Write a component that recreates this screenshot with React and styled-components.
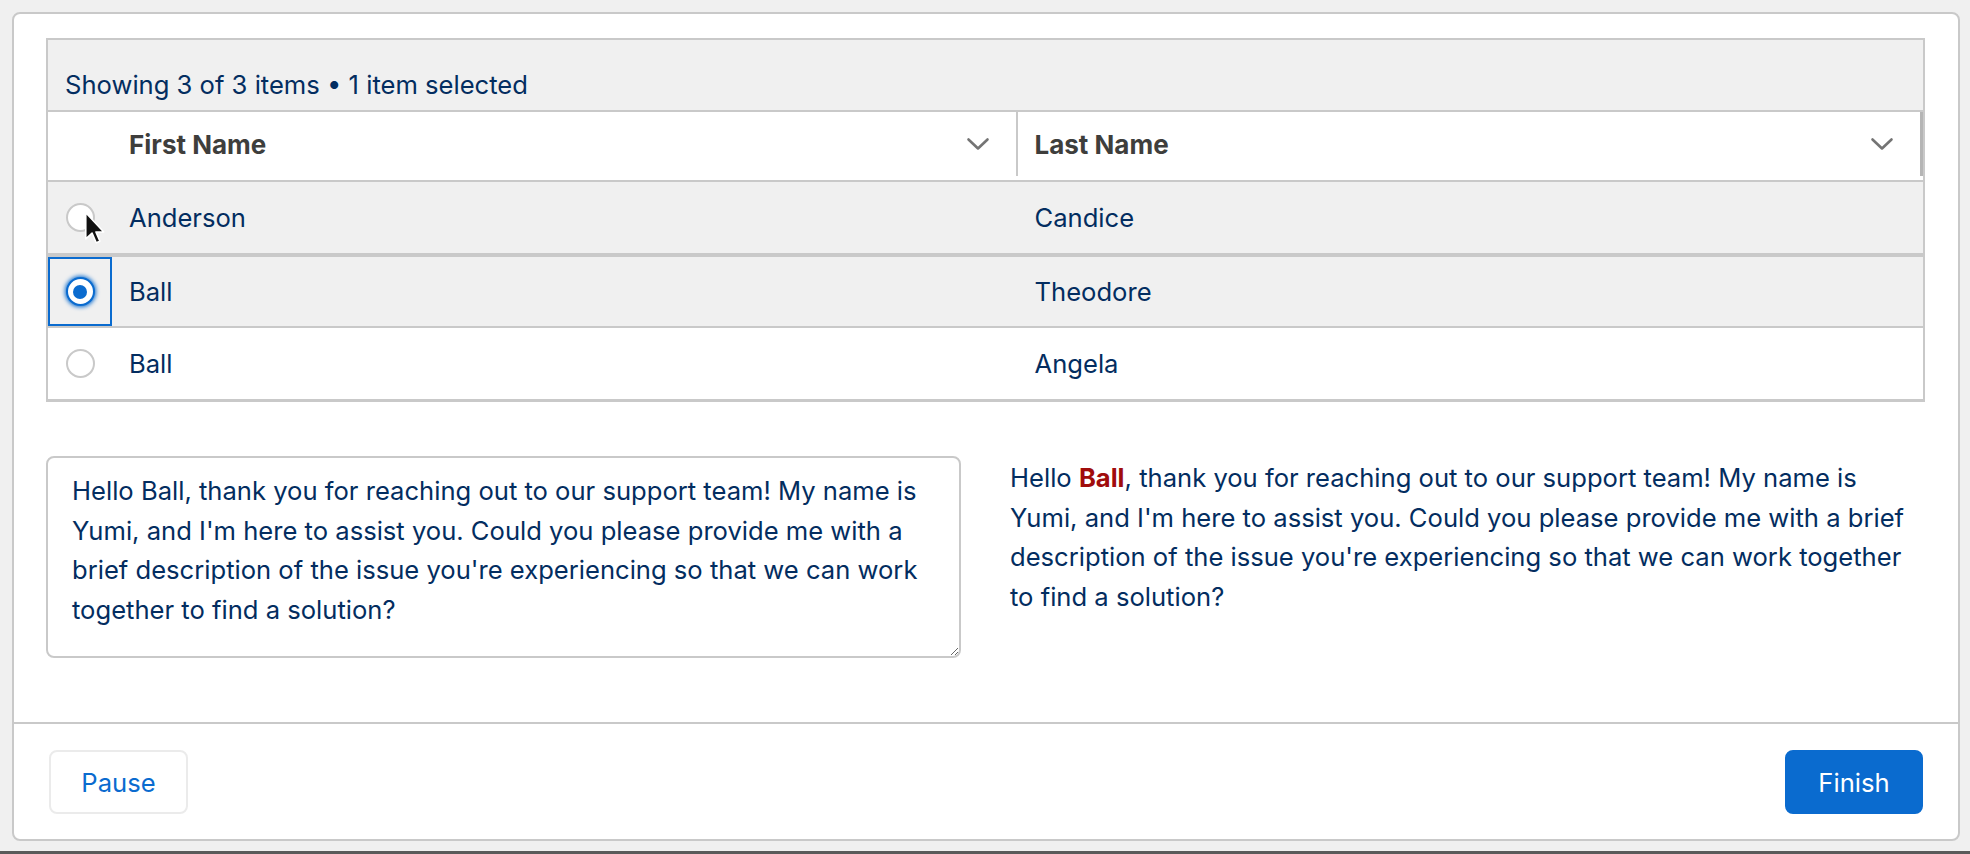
import React from 'react'
import styled, { createGlobalStyle } from 'styled-components'

const GlobalStyle = createGlobalStyle`
  html, body {
    margin: 0;
    padding: 0;
    background: #f0f0f0;
  }
  body {
    font-family: Inter, "Noto Sans", sans-serif;
    color: #032d60;
  }
  * { box-sizing: border-box; }
`

const BLUE = '#0a6bcf'
const LINE = '#c9c9c9'

const rows = [
  { first: 'Anderson', last: 'Candice', hover: true },
  { first: 'Ball', last: 'Theodore', selected: true },
  { first: 'Ball', last: 'Angela' },
]

const Chevron = () => (
  <svg width="24" height="14" viewBox="0 0 24 14">
    <path d="M2.5 2.5 L12 11.5 L21.5 2.5" fill="none" stroke="#747474" strokeWidth="2.6" strokeLinecap="round" strokeLinejoin="round" />
  </svg>
)

const Pointer = () => (
  <PointerSvg width="21" height="34" viewBox="0 0 12 19.5">
    <path d="M1 1 L1 16 L4.6 12.7 L7 18.2 L9.1 17.3 L6.8 12 L11.3 12 Z" fill="#111" stroke="#fff" strokeWidth="0.9" strokeLinejoin="round" />
  </PointerSvg>
)

const App = () => {
  return (
    <>
      <GlobalStyle />
      <Page>
        <Card>
          <Body>
            <Table>
              <Toolbar>Showing 3 of 3 items • 1 item selected</Toolbar>
              <HeaderRow>
                <HeadCell />
                <HeadCell $label>
                  First Name
                  <Chevron />
                </HeadCell>
                <HeadCell $label $last>
                  Last Name
                  <Chevron />
                </HeadCell>
              </HeaderRow>
              {rows.map((r, i) => (
                <Row key={i} $shaded={r.hover || r.selected} $selected={r.selected}>
                  <RadioCell $focused={r.selected}>
                    <Radio $checked={r.selected} />
                    {r.hover && <Pointer />}
                  </RadioCell>
                  <Cell>{r.first}</Cell>
                  <Cell>{r.last}</Cell>
                </Row>
              ))}
            </Table>
            <Fields>
              <TextArea
                defaultValue="Hello Ball, thank you for reaching out to our support team! My name is Yumi, and I'm here to assist you. Could you please provide me with a brief description of the issue you're experiencing so that we can work together to find a solution?"
              />
              <Preview>
                Hello <Name>Ball</Name>, thank you for reaching out to our support team! My name is Yumi, and I'm here to assist you. Could you please provide me with a brief description of the issue you're experiencing so that we can work together to find a solution?
              </Preview>
            </Fields>
          </Body>
          <Footer>
            <Button>Pause</Button>
            <Button $primary>Finish</Button>
          </Footer>
        </Card>
        <BottomEdge />
      </Page>
    </>
  )
}

export default App

const Page = styled.div`
  height: 854px;
  display: flex;
  flex-direction: column;
`

const Card = styled.div`
  margin: 12px 10px 0 12px;
  height: 829px;
  background: #fff;
  border: 2px solid ${LINE};
  border-radius: 8px;
  display: flex;
  flex-direction: column;
`

const Body = styled.div`
  flex: 1;
  padding: 24px 33px 0 32px;
`

const Table = styled.div`
  border: 2px solid ${LINE};
  border-bottom-width: 3px;
`

const Toolbar = styled.div`
  height: 72px;
  background: #f0f0f0;
  border-bottom: 2px solid ${LINE};
  display: flex;
  align-items: flex-end;
  padding: 0 17px 6px;
  font-size: 25.6px;
  line-height: 39px;
  color: #032d60;
`

const HeaderRow = styled.div`
  display: grid;
  grid-template-columns: 64px 1fr 1fr;
  height: 68px;
  background: #fff;
`

const HeadCell = styled.div`
  display: flex;
  align-items: center;
  justify-content: space-between;
  padding: 0 26px 0 17px;
  font-size: 26px;
  font-weight: 700;
  color: #3e3e3c;
  border-right: ${p => (p.$label ? (p.$last ? '3px solid #b5b5b5' : `2px solid ${LINE}`) : 'none')};
  margin-bottom: ${p => (p.$label ? '4px' : '0')};
`

const Row = styled.div`
  display: grid;
  grid-template-columns: 64px 1fr 1fr;
  height: 73px;
  border-top: ${p => (p.$selected ? '4px' : '2px')} solid ${LINE};
  background: ${p => (p.$shaded ? '#f0f0f0' : '#fff')};
`

const Cell = styled.div`
  display: flex;
  align-items: center;
  padding: 0 17px;
  font-size: 25.6px;
  color: #032d60;
`

const RadioCell = styled.div`
  position: relative;
  display: flex;
  align-items: center;
  justify-content: center;
  box-shadow: ${p => (p.$focused ? `inset 0 0 0 2px ${BLUE}` : 'none')};
`

const Radio = styled.span`
  width: 29px;
  height: 29px;
  border-radius: 50%;
  background: #fff;
  border: 2px solid ${p => (p.$checked ? BLUE : LINE)};
  box-shadow: ${p => (p.$checked ? `0 0 4px 1px ${BLUE}` : 'none')};
  display: flex;
  align-items: center;
  justify-content: center;

  &::after {
    content: '';
    display: ${p => (p.$checked ? 'block' : 'none')};
    width: 14px;
    height: 14px;
    border-radius: 50%;
    background: ${BLUE};
  }
`

const PointerSvg = styled.svg`
  position: absolute;
  left: 36px;
  top: 29px;
`

const Fields = styled.div`
  display: grid;
  grid-template-columns: 1fr 1fr;
  column-gap: 49px;
  margin-top: 54px;
`

const TextArea = styled.textarea`
  width: 100%;
  height: 202px;
  border: 2px solid ${LINE};
  border-radius: 8px;
  padding: 13px 24px 0 24px;
  font-family: Inter, "Noto Sans", sans-serif;
  font-size: 25.6px;
  line-height: 39.7px;
  color: #032d60;
  background: #fff;
  outline: none;
  resize: both;
`

const Preview = styled.p`
  margin: 0;
  padding-top: 2px;
  font-size: 25.6px;
  line-height: 39.7px;
  color: #032d60;
`

const Name = styled.span`
  color: #a00c0c;
  font-weight: 700;
`

const Footer = styled.div`
  height: 117px;
  border-top: 2px solid ${LINE};
  padding: 26px 35px 0 35px;
  display: flex;
  justify-content: space-between;
  align-items: flex-start;
`

const Button = styled.button`
  height: 64px;
  width: ${p => (p.$primary ? '138px' : '139px')};
  border-radius: 8px;
  border: 2px solid ${p => (p.$primary ? BLUE : '#ebebeb')};
  background: ${p => (p.$primary ? BLUE : '#fff')};
  color: ${p => (p.$primary ? '#fff' : BLUE)};
  font-family: Inter, "Noto Sans", sans-serif;
  font-size: 25.6px;
  cursor: pointer;
`

const BottomEdge = styled.div`
  margin-top: auto;
  height: 3px;
  background: #5a5a5a;
`
